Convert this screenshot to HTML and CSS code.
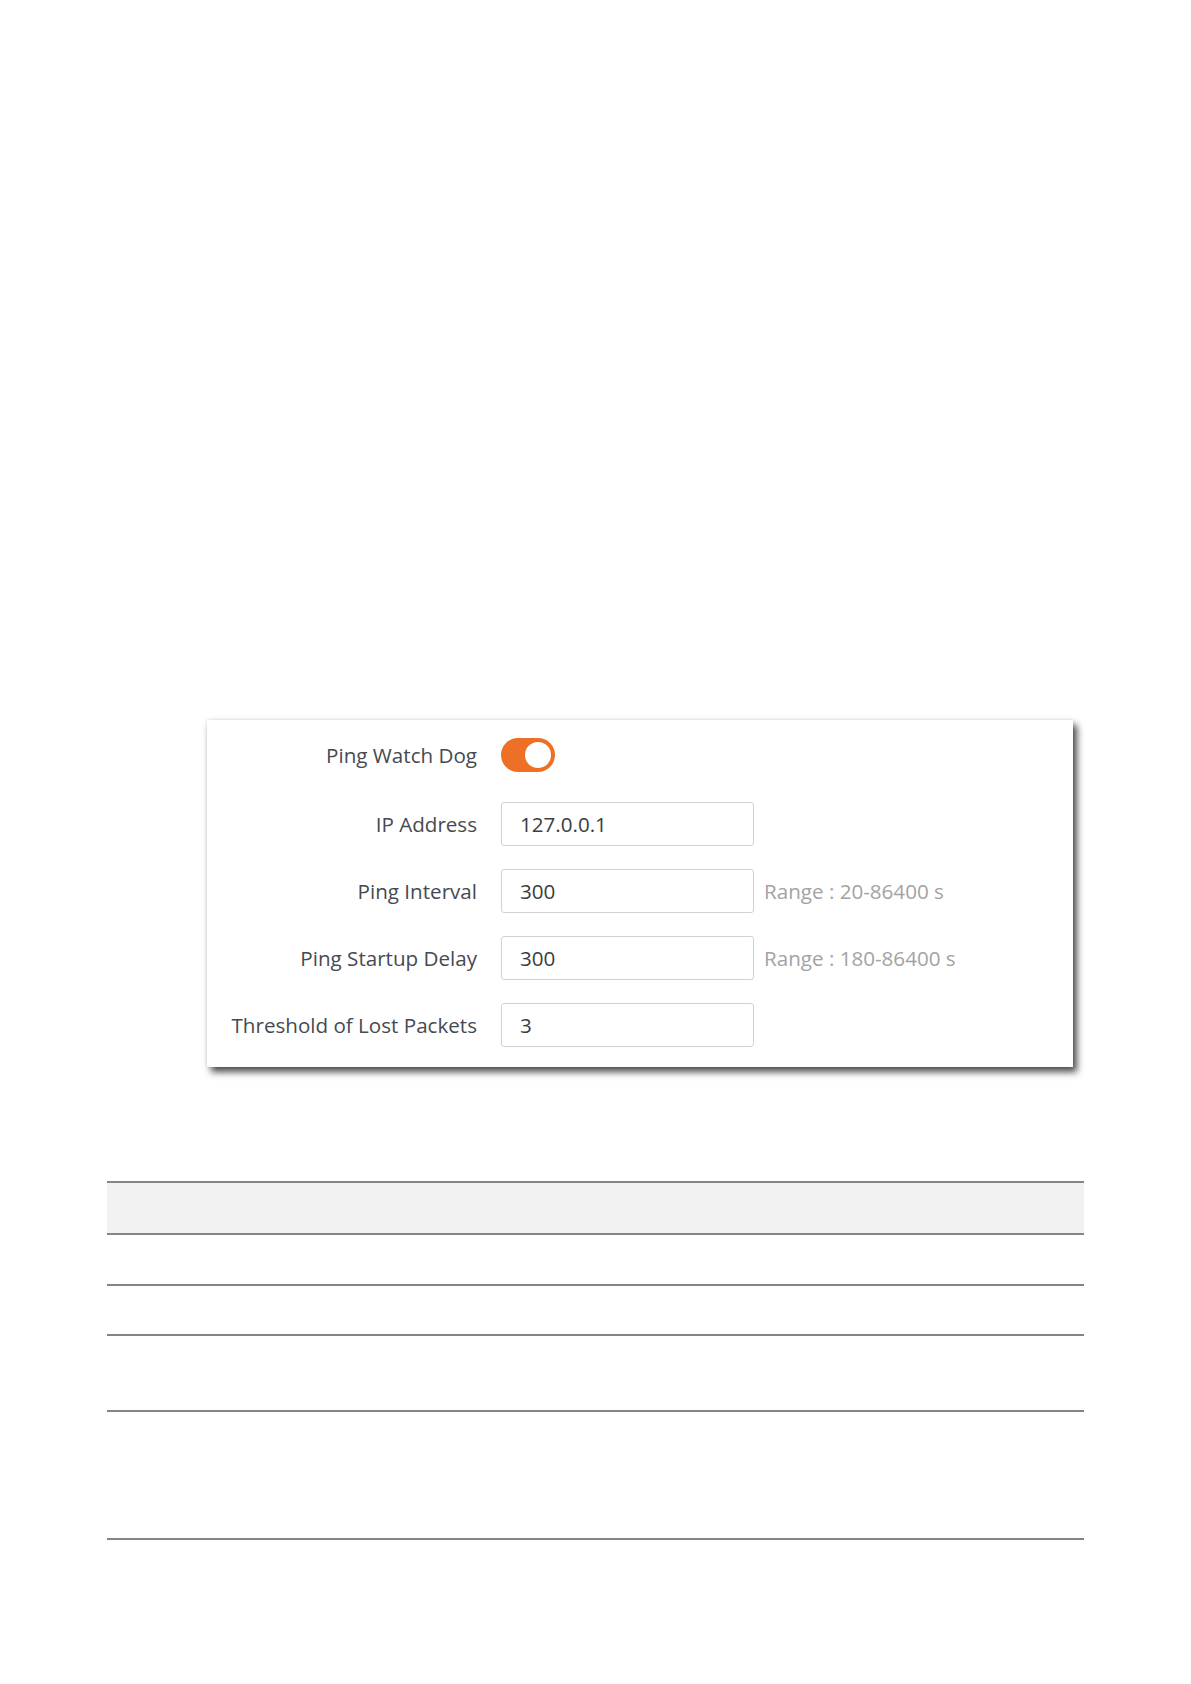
FILE: index.html
```html
<!DOCTYPE html>
<html lang="en">
<head>
    <meta charset="UTF-8">
    <meta name="viewport" content="width=device-width, initial-scale=1.0">
    <title>Ping Watch Dog</title>
    <link rel="stylesheet" href="styles.css">
</head>
<body>
    <div class="panel">
        <div class="row row-toggle">
            <label class="label">Ping Watch Dog</label>
            <span class="toggle on"><span class="knob"></span></span>
        </div>
        <div class="row">
            <label class="label" for="ip">IP Address</label>
            <input class="field" id="ip" type="text" value="127.0.0.1">
        </div>
        <div class="row">
            <label class="label" for="interval">Ping Interval</label>
            <input class="field" id="interval" type="text" value="300">
            <span class="hint">Range : 20-86400 s</span>
        </div>
        <div class="row">
            <label class="label" for="delay">Ping Startup Delay</label>
            <input class="field" id="delay" type="text" value="300">
            <span class="hint">Range : 180-86400 s</span>
        </div>
        <div class="row">
            <label class="label" for="lost">Threshold of Lost Packets</label>
            <input class="field" id="lost" type="text" value="3">
        </div>
    </div>

    <!-- parameter table, left empty as in the capture -->
    <div class="spec">
        <div class="spec-row spec-head"></div>
        <div class="spec-row" style="height: 51px"></div>
        <div class="spec-row" style="height: 50px"></div>
        <div class="spec-row" style="height: 76px"></div>
        <div class="spec-row" style="height: 128px"></div>
    </div>
</body>
</html>
```

FILE: styles.css
```css
body {
    margin: 0;
    background: #fff;
    font-family: "Open Sans", "Liberation Sans", Arial, sans-serif;
    color: #444;
}
.panel {
    box-sizing: border-box;
    width: 866px;
    margin: 720px 0 0 207px;
    padding: 18px 0 20px;
    background: #fff;
    display: flex;
    flex-direction: column;
    gap: 23px;
    box-shadow: 4px 5px 7px rgba(0, 0, 0, 0.7), 0 0 4px rgba(0, 0, 0, 0.12);
}
.row {
    display: flex;
    align-items: center;
    height: 44px;
}
.row-toggle {
    height: 34px;
    margin-bottom: 7px;
}
.label {
    width: 270px;
    margin-right: 24px;
    text-align: right;
    font-size: 20.6px;
    color: #464a50;
    white-space: nowrap;
}
.toggle {
    position: relative;
    width: 54px;
    height: 34px;
    border-radius: 17px;
    background: #ee7026;
}
.toggle .knob {
    position: absolute;
    top: 4px;
    right: 4px;
    width: 26px;
    height: 26px;
    border-radius: 50%;
    background: #fff;
}
.field {
    box-sizing: border-box;
    width: 253px;
    height: 44px;
    padding: 0 18px;
    border: 1px solid #d2d2d2;
    border-radius: 3px;
    font-family: inherit;
    font-size: 20.6px;
    color: #3a3d42;
    outline: none;
}
.hint {
    margin-left: 10px;
    font-size: 20.6px;
    color: #a3a3a3;
    white-space: nowrap;
}
.spec {
    width: 977px;
    margin: 114px 0 0 107px;
    border-top: 2px solid #858585;
}
.spec-row {
    box-sizing: border-box;
    border-bottom: 2px solid #858585;
}
.spec-head {
    height: 52px;
    background: #f2f2f2;
}
```
